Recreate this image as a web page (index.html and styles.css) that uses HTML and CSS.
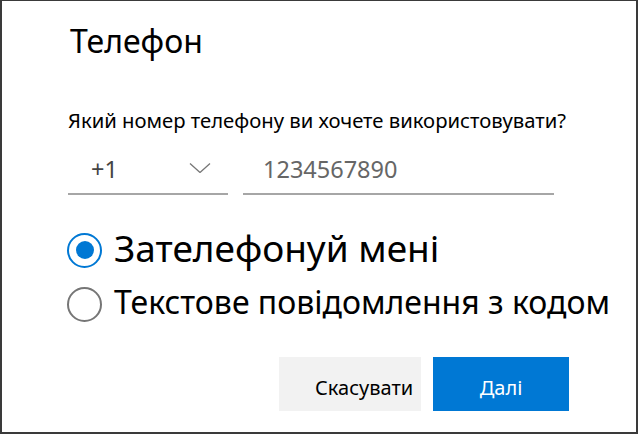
FILE: index.html
```html
<!DOCTYPE html>
<html lang="uk">
  <head>
    <meta charset="UTF-8" />
    <meta name="viewport" content="width=device-width, initial-scale=1.0" />
    <title>Телефон</title>
    <link rel="stylesheet" href="styles.css">
  </head>
  <body>
    <!-- Phone verification dialog -->
    <div class="dialog">
      <h1 class="dialog-title">Телефон</h1>

      <p class="field-label">Який номер телефону ви хочете використовувати?</p>

      <div class="phone-row">
        <div class="country-select">
          <span class="country-code">+1</span>
          <svg class="chevron" width="22" height="10" viewBox="0 0 22 10">
            <path d="M1 0.5 L11 9.5 L21 0.5" fill="none" stroke="#767676" stroke-width="1.3" />
          </svg>
        </div>
        <div class="phone-input">1234567890</div>
      </div>

      <!-- Delivery method -->
      <div class="options">
        <label class="option option-large">
          <span class="radio checked"></span>
          <span>Зателефонуй мені</span>
        </label>
        <label class="option">
          <span class="radio"></span>
          <span>Текстове повідомлення з кодом</span>
        </label>
      </div>

      <div class="actions">
        <div class="btn btn-secondary">Скасувати</div>
        <div class="btn btn-primary">Далі</div>
      </div>
    </div>
  </body>
</html>
```

FILE: styles.css
```css
/* General styles */
body {
  margin: 0;
  font-family: "Noto Sans", "Liberation Sans", sans-serif;
  color: #000;
  background: #fff;
}

/* Dialog frame */
.dialog {
  box-sizing: border-box;
  width: 638px;
  height: 434px;
  border: 2px solid #3a3a3a;
  border-top-width: 1px;
  padding: 0 0 0 66px;
}

.dialog-title {
  margin: 20px 0 0 2px;
  font-size: 32px;
  font-weight: normal;
  line-height: 40px;
}

.field-label {
  margin: 47px 0 0;
  font-size: 20.25px;
  line-height: 24px;
}

/* Phone number row */
.phone-row {
  display: flex;
  gap: 15px;
  margin-top: 8px;
}

.country-select,
.phone-input {
  box-sizing: border-box;
  padding-top: 11px;
  padding-bottom: 6px;
  border-bottom: 2px solid #a6a6a6;
  font-size: 23.5px;
  line-height: 36px;
}

.country-select {
  width: 160px;
  display: flex;
  align-items: center;
  justify-content: space-between;
  padding-left: 23px;
  padding-right: 17px;
  color: #444;
}

.chevron {
  margin-top: -3px;
}

.phone-input {
  width: 311px;
  padding-left: 20px;
  color: #666;
}

/* Radio options */
.options {
  margin-top: 31px;
}

.option {
  display: flex;
  align-items: center;
  gap: 12px;
  font-size: 32px;
  line-height: 44px;
}

.option-large {
  font-size: 37px;
  margin-bottom: 10px;
}

.radio {
  box-sizing: border-box;
  width: 35px;
  height: 35px;
  margin: 4px 0 0 -1px;
  border: 2px solid #767676;
  border-radius: 50%;
  display: flex;
  align-items: center;
  justify-content: center;
}

.radio.checked {
  border-color: #0078d4;
}

.radio.checked::after {
  content: "";
  width: 18px;
  height: 18px;
  border-radius: 50%;
  background: #0078d4;
}

/* Buttons */
.actions {
  display: flex;
  justify-content: flex-end;
  gap: 12px;
  margin: 33px 67px 0 0;
}

.btn {
  box-sizing: border-box;
  height: 54px;
  padding-top: 8px;
  line-height: 46px;
  font-size: 20px;
}

.btn-secondary {
  width: 142px;
  padding-left: 36px;
  background: #f2f2f2;
}

.btn-primary {
  width: 136px;
  text-align: center;
  background: #0078d4;
  color: #fff;
}
```
